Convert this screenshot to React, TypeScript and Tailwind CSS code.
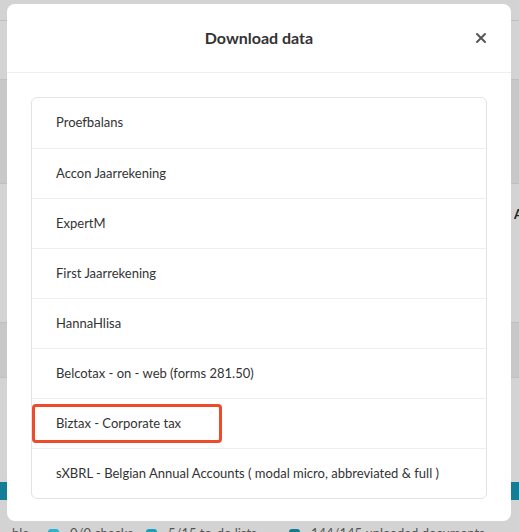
import { X } from 'lucide-react'

const exportTargets = [
  'Proefbalans',
  'Accon Jaarrekening',
  'ExpertM',
  'First Jaarrekening',
  'HannaHlisa',
  'Belcotax - on - web (forms 281.50)',
  'Biztax - Corporate tax',
  'sXBRL - Belgian Annual Accounts ( modal micro, abbreviated & full )',
]

const highlighted = 'Biztax - Corporate tax'

const App = () => {
  return (
    <div className="relative w-[519px] h-[532px] overflow-hidden bg-[#d3d3d3] font-['Lato','Liberation_Sans',sans-serif] text-[#333]">
      {/* dimmed page behind the modal */}
      <div className="flex flex-col">
        <div className="h-[21px] border-b border-[#bfbfbf]"></div>
        <div className="h-[59px] border-b border-[#bfbfbf]"></div>
        <div className="h-[104px] border-b border-[#bfbfbf] bg-[#c8c8c8]"></div>
        <div className="h-[139px] border-b border-[#bfbfbf] flex justify-end pt-[21px]">
          <span className="text-[13px] font-bold text-[#222] mr-[-4px]">A</span>
        </div>
        <div className="h-[55px] border-b border-[#bfbfbf] bg-[#c8c8c8]"></div>
        <div className="h-[104px]"></div>
        <div className="h-[18px] bg-[#127d97]"></div>
        <div className="h-[27px]"></div>
        <div className="flex items-start pl-[12px] text-[13px] text-[#555] leading-none whitespace-nowrap">
          <span className="w-[36px]">ble</span>
          <span className="mt-[2px] w-[11px] h-[11px] rounded-[3px] bg-[#2ab4cf]"></span>
          <span className="ml-[11px] w-[76px]">0/0 checks</span>
          <span className="mt-[2px] w-[11px] h-[11px] rounded-[3px] bg-[#1c9db8]"></span>
          <span className="ml-[11px] w-[121px]">5/15 to-do lists</span>
          <span className="mt-[2px] w-[11px] h-[11px] rounded-[3px] bg-[#137a94]"></span>
          <span className="ml-[11px]">144/145 uploaded documents</span>
        </div>
      </div>

      {/* modal */}
      <div className="absolute left-[7px] top-[4px] w-[504px] h-[517px] bg-white rounded-lg flex flex-col">
        <div className="relative h-[69px] shrink-0 flex justify-center items-center border-b border-[#efefef]">
          <h2 className="text-[16px] font-bold text-[#333]">Download data</h2>
          <button className="absolute right-[22px] top-[26px] text-[#555]">
            <X size={16} strokeWidth={3} />
          </button>
        </div>
        <div className="px-6 pt-6">
          <ul className="border border-[#e3e3e3] rounded-md">
            {exportTargets.map((name, index) => (
              <li
                key={name}
                className={`relative h-[50px] flex items-center pl-6 text-[13px] ${
                  index > 0 ? 'border-t border-[#efefef]' : ''
                }`}
              >
                {name}
                {name === highlighted && (
                  <div className="absolute left-0 top-[5px] w-[190px] h-[39px] border-[3px] border-[#ef4a2a] rounded-[4px]"></div>
                )}
              </li>
            ))}
          </ul>
        </div>
      </div>
    </div>
  )
}

export default App
